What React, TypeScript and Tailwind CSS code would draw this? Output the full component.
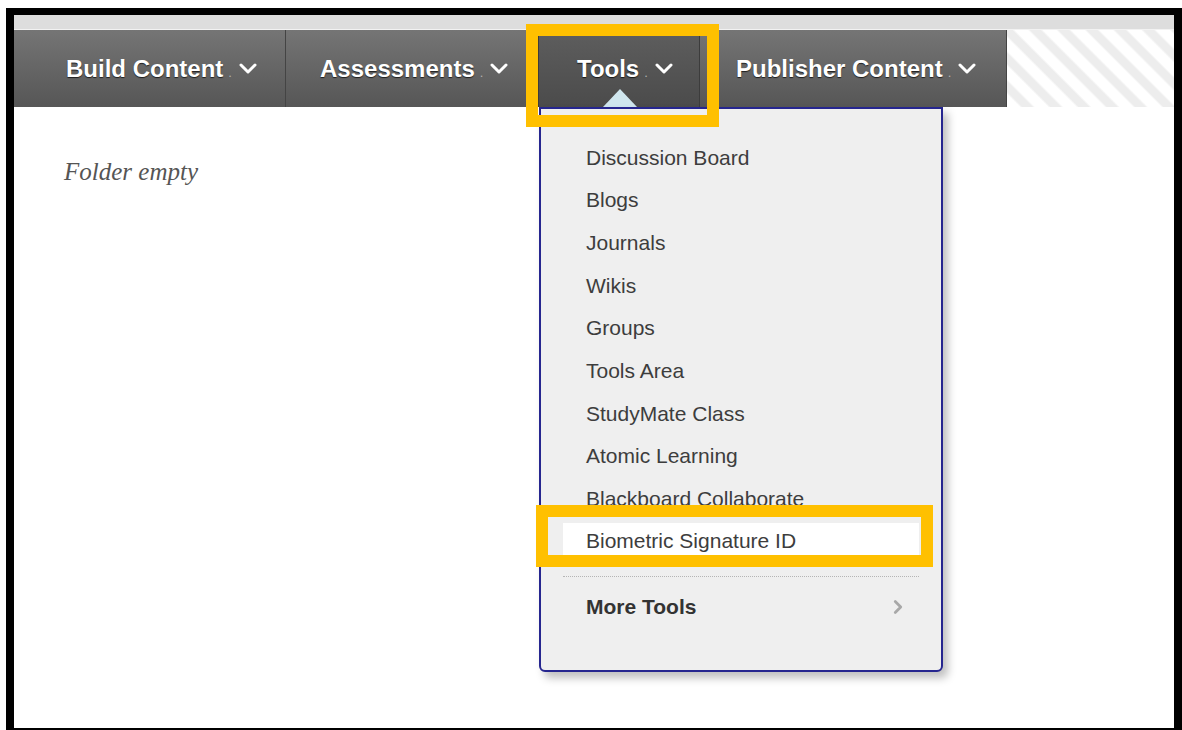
import { ChevronRight } from 'lucide-react';

const toolItems = [
  'Discussion Board',
  'Blogs',
  'Journals',
  'Wikis',
  'Groups',
  'Tools Area',
  'StudyMate Class',
  'Atomic Learning',
  'Blackboard Collaborate',
  'Biometric Signature ID',
];

function Caret() {
  return (
    <svg width="18" height="12" viewBox="0 0 18 12" className="ml-[7px]">
      <polyline points="2,2 9,9 16,2" fill="none" stroke="#ffffff" strokeWidth="3" strokeLinecap="round" strokeLinejoin="round" />
    </svg>
  );
}

function NavItem({ label, width, pad, active }: { label: string; width: string; pad: string; active?: boolean }) {
  return (
    <div
      className={`${width} ${pad} flex h-full items-center ${
        active
          ? 'bg-gradient-to-b from-[#5e5e5e] to-[#4b4b4b] border-x border-[#3c3c3c]'
          : 'border-r border-[#444444]'
      }`}
    >
      <span className="text-[24px] font-bold text-white [text-shadow:0_1px_1px_rgba(0,0,0,0.7)]">{label}</span>
      <span className="ml-[5px] mt-[8px] text-[13px] text-[#b0b0b0]">.</span>
      <Caret />
    </div>
  );
}

export default function App() {
  return (
    <div className="relative h-[730px] w-[1182px] overflow-hidden bg-white font-['Liberation_Sans',Arial,sans-serif]">
      {/* framed course page */}
      <div className="ml-[6px] mt-[8px] flex h-[722px] w-[1176px] flex-col border-t-[7px] border-l-8 border-r-8 border-b-2 border-black bg-white">
        <div className="h-[15px] border-b border-[#f2f2f2] bg-[#dddddd]" />
        <nav className="flex h-[77px] bg-gradient-to-b from-[#757575] to-[#565656]">
          <NavItem label="Build Content" width="w-[272px]" pad="pl-[52px]" />
          <NavItem label="Assessments" width="w-[252px]" pad="pl-[34px]" />
          <NavItem label="Tools" width="w-[162px]" pad="pl-[38px]" active />
          <NavItem label="Publisher Content" width="w-[307px]" pad="pl-[36px]" />
          <div className="flex-1 bg-[repeating-linear-gradient(45deg,#ffffff_0px,#ffffff_9px,#ededed_11px,#ededed_18px,#ffffff_20px)]" />
        </nav>
        <div className="flex-1 pl-[50px] pt-[46px]">
          <p className="font-['Liberation_Serif',Georgia,serif] text-[25px] italic text-[#555555]">Folder empty</p>
        </div>
      </div>

      {/* pointer above the open menu */}
      <div className="absolute left-[603px] top-[89px] h-0 w-0 border-x-[17px] border-b-[18px] border-x-transparent border-b-[#cfe6ee]" />

      {/* Tools dropdown */}
      <div className="absolute left-[539px] top-[107px] h-[565px] w-[404px] rounded-b-[6px] border-2 border-[#26268f] bg-[#efefef] px-[22px] pt-[27px] shadow-[5px_6px_8px_rgba(0,0,0,0.25)]">
        <ul>
          {toolItems.map((item) => (
            <li key={item} className="flex h-[42.7px] items-center">
              <span
                className={`flex h-[34px] w-full items-center pl-[23px] text-[21px] text-[#3d3d3d] ${
                  item === 'Biometric Signature ID' ? 'mt-[-3px] pt-[2px] bg-white' : ''
                }`}
              >
                {item}
              </span>
            </li>
          ))}
        </ul>
        <div className="mt-[13px] border-t border-dotted border-[#b5b5b5]" />
        <div className="flex h-[60px] items-center justify-between pl-[23px] pr-[10px]">
          <span className="text-[21px] font-bold text-[#333333]">More Tools</span>
          <ChevronRight className="h-[22px] w-[22px] text-[#a8a8a8]" strokeWidth={3} />
        </div>
      </div>

      {/* highlight boxes */}
      <div className="absolute left-[526px] top-[24px] h-[103px] w-[193px] border-[12px] border-[#ffc000]" />
      <div className="absolute left-[536px] top-[505px] h-[62px] w-[397px] border-[12px] border-[#ffc000]" />
    </div>
  );
}
